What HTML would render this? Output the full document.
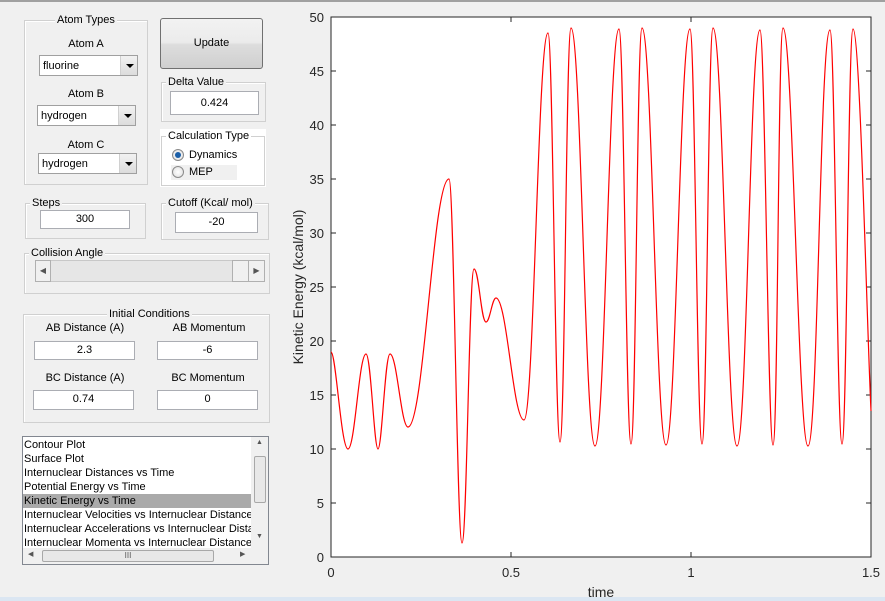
<!DOCTYPE html>
<html><head><meta charset="utf-8"><style>
*{box-sizing:border-box;margin:0;padding:0}
body{width:885px;height:601px;background:#f0f0f0;position:relative;overflow:hidden;font-family:"Liberation Sans",sans-serif;font-size:11px;color:#000}
.a{position:absolute}
.grp{position:absolute;border:1px solid #d0d0d0;box-shadow:inset 1px 1px 0 #fff}
.gt{position:absolute;background:#f0f0f0;padding:0 2px;font-size:11px;line-height:12px;top:-7px}
.ed{position:absolute;background:#fff;border:1px solid #abadb3;text-align:center;line-height:17px;font-size:11px}
.pop{position:absolute;background:#fff;border:1px solid #a0a0a0;line-height:20px;padding-left:3px;font-size:11px}
.pop .btn{position:absolute;right:0;top:0;width:17px;height:100%;background:linear-gradient(#f2f2f2,#dcdcdc);border-left:1px solid #d0d0d0}
.pop .btn:after{content:"";position:absolute;left:5px;top:8px;border-left:4px solid transparent;border-right:4px solid transparent;border-top:4px solid #000}
.lb{position:absolute;text-align:center;font-size:11px}
.rad{position:absolute;width:12px;height:12px;border-radius:50%;border:1px solid #8a8a8a;background:radial-gradient(#fff,#ddd)}
</style></head><body>
<div class="a" style="left:0;top:0;width:885px;height:2px;background:#a0a0a0"></div>
<div class="a" style="left:0;top:597px;width:885px;height:4px;background:#dbe6f2"></div>

<div class="grp" style="left:24px;top:20px;width:124px;height:165px"><div class="gt" style="left:30px">Atom Types</div></div>
<div class="lb" style="left:24px;top:38px;width:124px">Atom A</div>
<div class="pop" style="left:39px;top:55px;width:99px;height:21px">fluorine<div class="btn"></div></div>
<div class="lb" style="left:24px;top:88px;width:124px">Atom B</div>
<div class="pop" style="left:37px;top:105px;width:99px;height:21px">hydrogen<div class="btn"></div></div>
<div class="lb" style="left:24px;top:139px;width:124px">Atom C</div>
<div class="pop" style="left:38px;top:153px;width:99px;height:21px">hydrogen<div class="btn"></div></div>

<div class="a" style="left:160px;top:18px;width:103px;height:51px;border:1px solid #707070;border-radius:3px;background:linear-gradient(#f2f2f2 0%,#ebebeb 48%,#dddddd 52%,#cfcfcf 100%);text-align:center;line-height:49px">Update</div>

<div class="grp" style="left:161px;top:82px;width:105px;height:40px"><div class="gt" style="left:4px">Delta Value</div></div>
<div class="ed" style="left:170px;top:91px;width:89px;height:24px;line-height:22px">0.424</div>

<div class="a" style="left:160px;top:129px;width:106px;height:58px;background:#fff"></div>
<div class="grp" style="left:161px;top:136px;width:104px;height:50px;background:#fff"><div class="gt" style="left:4px;background:#fff">Calculation Type</div></div>
<div class="a" style="left:171px;top:165px;width:66px;height:15px;background:#f0f0f0"></div>
<div class="rad" style="left:172px;top:149px"><div class="a" style="left:2px;top:2px;width:6px;height:6px;border-radius:50%;background:#1b5fa8"></div></div>
<div class="a" style="left:189px;top:149px">Dynamics</div>
<div class="rad" style="left:172px;top:166px"></div>
<div class="a" style="left:189px;top:166px">MEP</div>

<div class="grp" style="left:25px;top:203px;width:121px;height:36px"><div class="gt" style="left:4px">Steps</div></div>
<div class="ed" style="left:40px;top:210px;width:90px;height:19px">300</div>
<div class="grp" style="left:161px;top:203px;width:108px;height:37px"><div class="gt" style="left:4px">Cutoff (Kcal/ mol)</div></div>
<div class="ed" style="left:175px;top:212px;width:83px;height:21px;line-height:19px">-20</div>

<div class="grp" style="left:24px;top:253px;width:246px;height:41px"><div class="gt" style="left:4px">Collision Angle</div></div>
<div class="a" style="left:35px;top:260px;width:230px;height:22px;background:#e6e6e6;border:1px solid #c8c8c8"></div>
<div class="a" style="left:35px;top:260px;width:16px;height:22px;background:#f0f0f0;border:1px solid #b0b0b0;font-size:8px;color:#555;text-align:center;line-height:20px">◀</div>
<div class="a" style="left:232px;top:260px;width:17px;height:22px;background:#f0f0f0;border:1px solid #b0b0b0"></div>
<div class="a" style="left:248px;top:260px;width:17px;height:22px;background:#f0f0f0;border:1px solid #b0b0b0;font-size:8px;color:#555;text-align:center;line-height:20px">▶</div>

<div class="grp" style="left:23px;top:314px;width:247px;height:109px"><div class="gt" style="left:83px">Initial Conditions</div></div>
<div class="lb" style="left:25px;top:322px;width:120px">AB Distance (A)</div>
<div class="lb" style="left:150px;top:322px;width:118px">AB Momentum</div>
<div class="ed" style="left:34px;top:341px;width:101px;height:19px">2.3</div>
<div class="ed" style="left:157px;top:341px;width:101px;height:19px">-6</div>
<div class="lb" style="left:25px;top:372px;width:120px">BC Distance (A)</div>
<div class="lb" style="left:148px;top:372px;width:120px">BC Momentum</div>
<div class="ed" style="left:33px;top:390px;width:101px;height:20px">0.74</div>
<div class="ed" style="left:157px;top:390px;width:101px;height:20px">0</div>

<div class="a" style="left:22px;top:436px;width:247px;height:129px;background:#fff;border:1px solid #828790;overflow:hidden">
<div style="position:absolute;left:0;top:1px;width:228px;line-height:14px;white-space:nowrap;overflow:hidden">
<div style="padding-left:1px">Contour Plot</div>
<div style="padding-left:1px">Surface Plot</div>
<div style="padding-left:1px">Internuclear Distances vs Time</div>
<div style="padding-left:1px">Potential Energy vs Time</div>
<div style="padding-left:1px;background:#aaaaaa">Kinetic Energy vs Time</div>
<div style="padding-left:1px">Internuclear Velocities vs Internuclear Distance</div>
<div style="padding-left:1px">Internuclear Accelerations vs Internuclear Distance</div>
<div style="padding-left:1px">Internuclear Momenta vs Internuclear Distance</div>
</div>
<div class="a" style="left:228px;top:0;width:17px;height:111px;background:#f0f0f0"></div>
<div class="a" style="left:231px;top:19px;width:12px;height:47px;background:#e8e8e8;border:1px solid #a8a8a8;border-radius:2px"></div>
<div class="a" style="left:233px;top:2px;font-size:7px;color:#555">▲</div>
<div class="a" style="left:233px;top:96px;font-size:7px;color:#555">▼</div>
<div class="a" style="left:0;top:111px;width:245px;height:16px;background:#f0f0f0"></div>
<div class="a" style="left:19px;top:113px;width:172px;height:12px;background:#e8e8e8;border:1px solid #a8a8a8;border-radius:2px;text-align:center;font-size:8px;line-height:10px;color:#555">III</div>
<div class="a" style="left:5px;top:113px;font-size:7px;color:#555">◀</div>
<div class="a" style="left:217px;top:113px;font-size:7px;color:#555">▶</div>
</div>

<svg class="a" style="left:0;top:0" width="885" height="601" xmlns="http://www.w3.org/2000/svg">
<rect x="331" y="17" width="540" height="540" fill="#fff" stroke="#262626" stroke-width="1"/>
<g stroke="#262626" stroke-width="1">
<line x1="331" y1="503" x2="336" y2="503"/><line x1="331" y1="449" x2="336" y2="449"/><line x1="331" y1="395" x2="336" y2="395"/><line x1="331" y1="341" x2="336" y2="341"/><line x1="331" y1="287" x2="336" y2="287"/><line x1="331" y1="233" x2="336" y2="233"/><line x1="331" y1="179" x2="336" y2="179"/><line x1="331" y1="125" x2="336" y2="125"/><line x1="331" y1="71" x2="336" y2="71"/>
<line x1="871" y1="503" x2="866" y2="503"/><line x1="871" y1="449" x2="866" y2="449"/><line x1="871" y1="395" x2="866" y2="395"/><line x1="871" y1="341" x2="866" y2="341"/><line x1="871" y1="287" x2="866" y2="287"/><line x1="871" y1="233" x2="866" y2="233"/><line x1="871" y1="179" x2="866" y2="179"/><line x1="871" y1="125" x2="866" y2="125"/><line x1="871" y1="71" x2="866" y2="71"/>
<line x1="511" y1="557" x2="511" y2="552"/><line x1="691" y1="557" x2="691" y2="552"/>
<line x1="511" y1="17" x2="511" y2="22"/><line x1="691" y1="17" x2="691" y2="22"/>
</g>
<g font-family="Liberation Sans, sans-serif" font-size="13" fill="#262626" text-anchor="end">
<text x="324" y="562">0</text><text x="324" y="508">5</text><text x="324" y="454">10</text><text x="324" y="400">15</text><text x="324" y="346">20</text><text x="324" y="292">25</text><text x="324" y="238">30</text><text x="324" y="184">35</text><text x="324" y="130">40</text><text x="324" y="76">45</text><text x="324" y="22">50</text>
</g>
<g font-family="Liberation Sans, sans-serif" font-size="13" fill="#262626" text-anchor="middle">
<text x="331" y="577">0</text><text x="511" y="577">0.5</text><text x="691" y="577">1</text><text x="871" y="577">1.5</text>
<text x="601" y="597" font-size="14">time</text>
<text transform="translate(303,287) rotate(-90)" font-size="14">Kinetic Energy (kcal/mol)</text>
</g>
<path fill="none" stroke="#ff0000" stroke-width="1.2" d="M331,352 C336,352 341,449 348,449 C355,449 359,354 366,354 C371,354 374,449 378,449 C382,449 385,354 390,354 C397,354 401,427 408,427 C424,427 433,179 449,179 C454,179 457,543 462,543 C467,543 469,269 474,269 C479,269 481,322 486,322 C490,322 492,298 496,298 C507,298 513,420 524,420 C534,420 538,33 548,33 C553,33 555,442 560,442 C565,442 566,28 571,28 C581,28 585,446 595,446 C605,446 609,29 619,29 C624,29 626,444 631,444 C636,444 637,28 642,28 C652,28 656,445 666,445 C676,445 680,29 690,29 C695,29 697,444 702,444 C707,444 708,28 713,28 C723,28 727,446 737,446 C747,446 750,30 760,30 C765,30 768,445 773,445 C778,445 778,28 783,28 C793,28 798,446 808,446 C818,446 820,30 830,30 C835,30 837,444 842,444 C847,444 848,29 853,29 C860,29 867,330 871,411"/>
</svg>
</body></html>
